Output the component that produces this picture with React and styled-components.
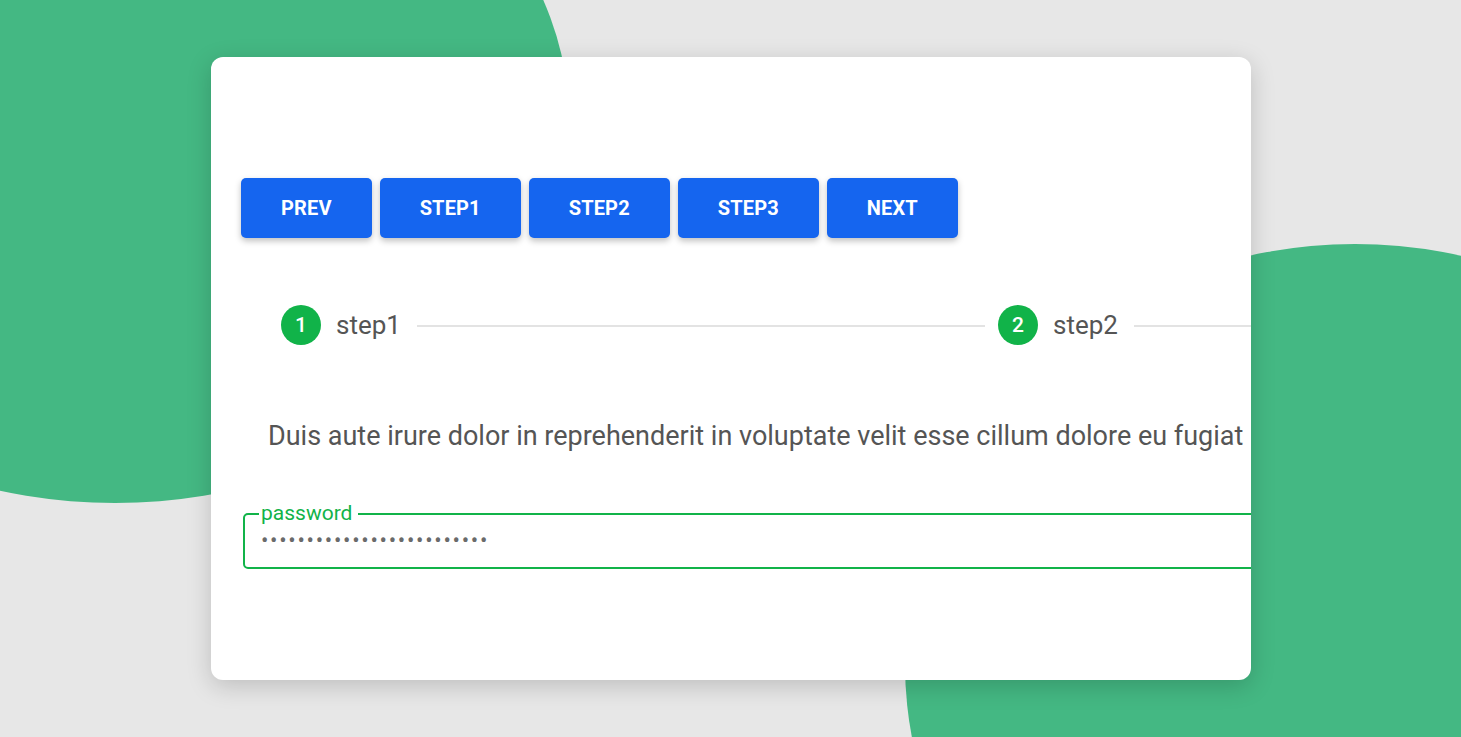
import React from "react";
import styled, { createGlobalStyle } from "styled-components";

const green = "#44b883";
const stepGreen = "#11b349";
const blue = "#1565ef";

const GlobalStyle = createGlobalStyle`
    html, body {
        margin: 0;
        padding: 0;
        width: 100%;
        height: 100%;
        overflow: hidden;
        background: #e7e7e7;
        font-family: Roboto, "Noto Sans", sans-serif;
    }
`;

const Page = styled.div`
    position: relative;
    width: 1461px;
    height: 737px;
    overflow: hidden;
    background: #e7e7e7;
`;

const Blob = styled.div`
    position: absolute;
    border-radius: 50%;
    background: ${green};
`;

const BlobTopLeft = styled(Blob)`
    left: -340px;
    top: -249px;
    width: 910px;
    height: 752px;
`;

const BlobBottomRight = styled(Blob)`
    left: 905px;
    top: 244px;
    width: 900px;
    height: 840px;
`;

const Stage = styled.div`
    position: relative;
    padding: 57px 0 0 211px;
`;

const Card = styled.div`
    width: 1040px;
    height: 623px;
    box-sizing: border-box;
    background: #fff;
    border-radius: 12px;
    box-shadow: 0 6px 24px rgba(0, 0, 0, 0.18);
    overflow: hidden;
    padding: 121px 0 0 30px;
    display: flex;
    flex-direction: column;
    align-items: flex-start;
`;

const Toolbar = styled.div`
    display: flex;
    gap: 8px;
`;

const Button = styled.button`
    height: 60px;
    padding: 0 40px;
    border: none;
    border-radius: 5px;
    background: ${blue};
    color: #fff;
    font-family: Roboto, sans-serif;
    font-weight: 700;
    font-size: 20px;
    letter-spacing: 0.15px;
    box-shadow: 0 3px 6px rgba(0, 0, 0, 0.25);
    cursor: pointer;
`;

const Stepper = styled.div`
    display: flex;
    align-items: center;
    margin: 67px 0 0 40px;
    width: 2200px;
`;

const Step = styled.div`
    display: flex;
    align-items: center;
    width: 717px;
    flex-shrink: 0;
`;

const StepDot = styled.div`
    width: 40px;
    height: 40px;
    border-radius: 50%;
    background: ${stepGreen};
    color: #fff;
    display: flex;
    align-items: center;
    justify-content: center;
    font-size: 21px;
    font-weight: 500;
    flex-shrink: 0;
`;

const StepLabel = styled.span`
    margin-left: 15px;
    font-size: 26px;
    color: #555;
    flex-shrink: 0;
`;

const StepLine = styled.div`
    flex: 1;
    height: 2px;
    margin: 1px 13px 0 16px;
    background: #e3e3e3;
`;

const Paragraph = styled.p`
    margin: 75px 0 0 27px;
    font-size: 27px;
    line-height: 32px;
    color: #555;
    white-space: nowrap;
`;

const Field = styled.fieldset`
    margin: 51px 0 0 2px;
    width: 1200px;
    height: 66px;
    box-sizing: border-box;
    border: 2.5px solid ${stepGreen};
    border-radius: 5px;
    padding: 0 16px;
    flex-shrink: 0;
`;

const Legend = styled.legend`
    margin-left: -2px;
    padding: 0 6px 0 2px;
    font-size: 21px;
    line-height: 1;
    color: ${stepGreen};
`;

const Input = styled.input`
    display: block;
    margin-top: 4px;
    width: 100%;
    border: none;
    outline: none;
    padding: 0;
    font-family: Roboto, sans-serif;
    font-size: 22px;
    color: #6a6a6a;
    letter-spacing: 1.7px;
    background: transparent;
`;

const steps = ["step1", "step2", "step3"];

export default function App() {
    return (
        <Page>
            <GlobalStyle />
            <BlobTopLeft />
            <BlobBottomRight />
            <Stage>
                <Card>
                    <Toolbar>
                        <Button>PREV</Button>
                        <Button>STEP1</Button>
                        <Button>STEP2</Button>
                        <Button>STEP3</Button>
                        <Button>NEXT</Button>
                    </Toolbar>
                    <Stepper>
                        {steps.map((s, i) => (
                            <Step key={s}>
                                <StepDot>{i + 1}</StepDot>
                                <StepLabel>{s}</StepLabel>
                                {i < steps.length - 1 && <StepLine />}
                            </Step>
                        ))}
                    </Stepper>
                    <Paragraph>
                        Duis aute irure dolor in reprehenderit in voluptate velit esse
                        cillum dolore eu fugiat nulla pariatur.
                    </Paragraph>
                    <Field>
                        <Legend>password</Legend>
                        <Input
                            type="password"
                            defaultValue="abcdefghijklmnopqrstuvwxy"
                            readOnly
                        />
                    </Field>
                </Card>
            </Stage>
        </Page>
    );
}
